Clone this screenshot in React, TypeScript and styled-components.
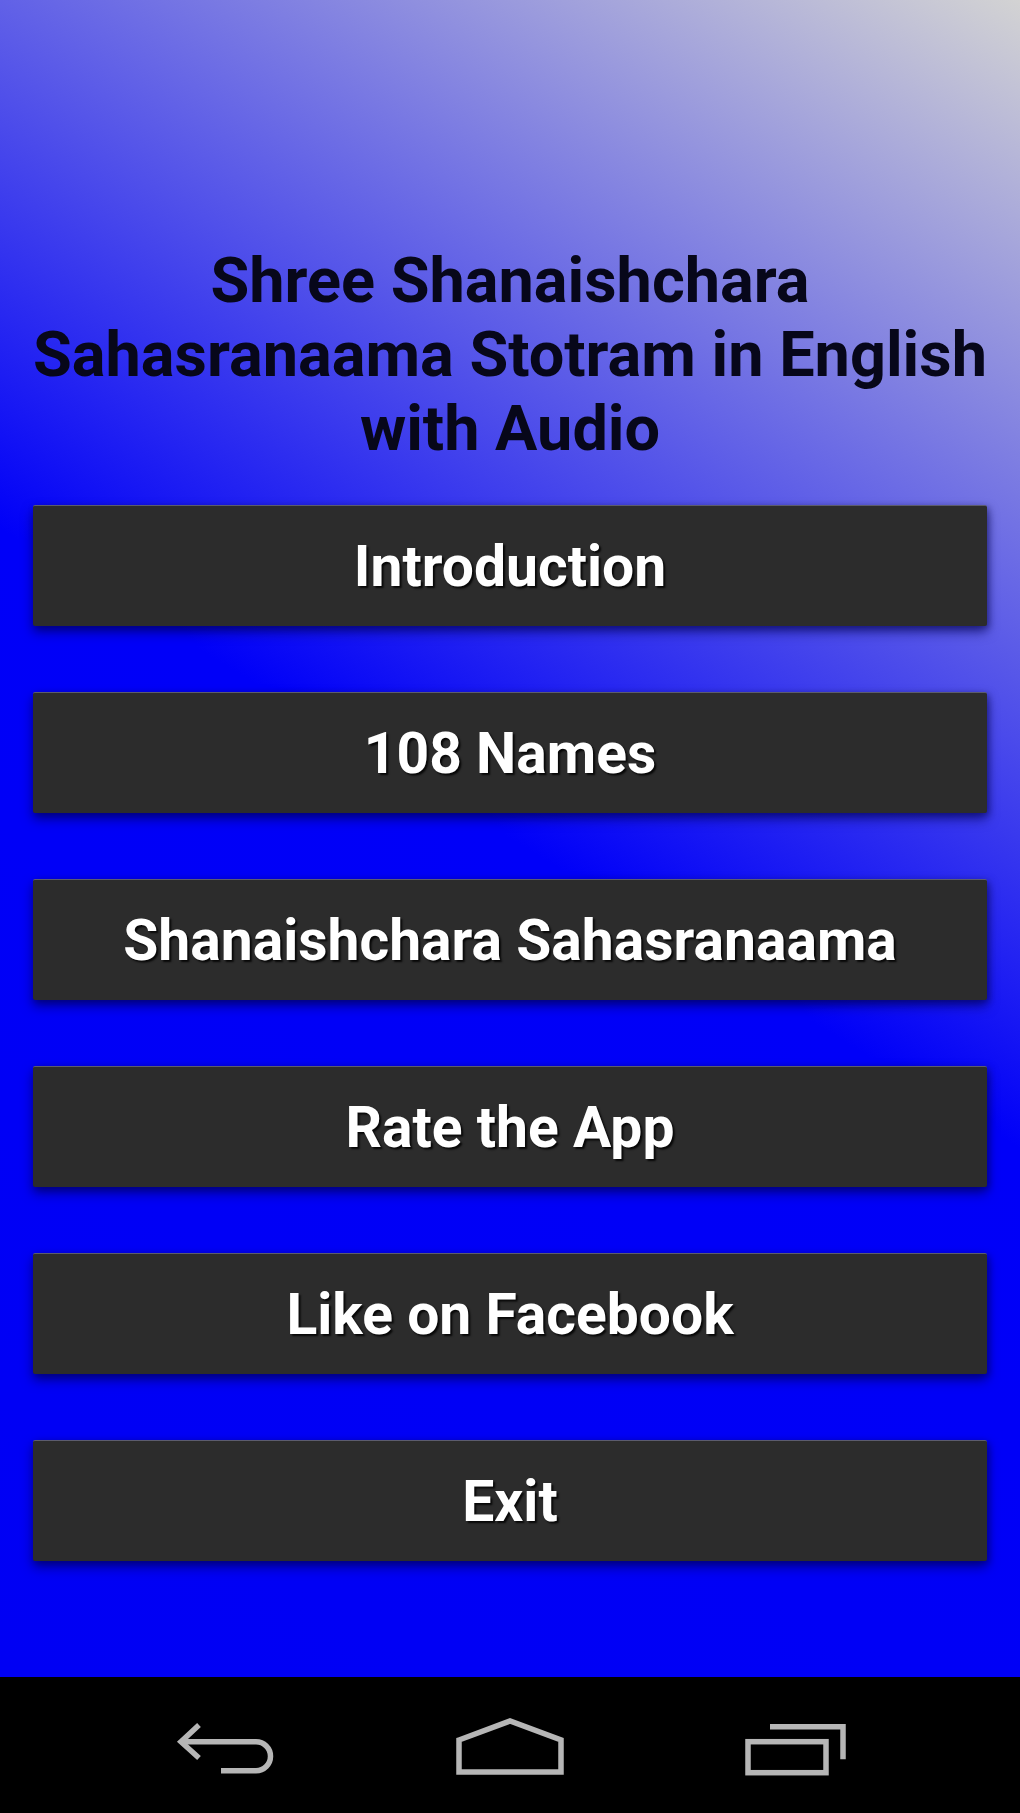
import React from "react";
import styled, { createGlobalStyle } from "styled-components";

const GlobalStyle = createGlobalStyle`
  html, body {
    margin: 0;
    padding: 0;
    background: #000;
  }
  body {
    font-family: Roboto, "Liberation Sans", Arial, sans-serif;
  }
  * { box-sizing: border-box; }
`;

const Screen = styled.div`
  width: 1020px;
  height: 1813px;
  display: flex;
  flex-direction: column;
  overflow: hidden;
`;

const Main = styled.main`
  flex: 1;
  display: flex;
  flex-direction: column;
  align-items: stretch;
  padding: 244px 33px 0;
  background: linear-gradient(31.3deg, #0000f4 0%, #0000f8 50%, #d3d3d3 100%);
`;

const Title = styled.h1`
  margin: 0 0 39px;
  font-family: Roboto, "Liberation Sans", Arial, sans-serif;
  font-weight: 700;
  font-size: 63px;
  line-height: 74px;
  color: #07071a;
  text-align: center;
  white-space: nowrap;
`;

const Menu = styled.nav`
  display: flex;
  flex-direction: column;
  gap: 66px;
`;

const MenuButton = styled.button`
  height: 121px;
  width: 100%;
  border: none;
  border-top: 1px solid rgba(150, 150, 190, 0.45);
  border-radius: 2px;
  background: #2c2c2c;
  color: #ffffff;
  font-family: Roboto, "Liberation Sans", Arial, sans-serif;
  font-weight: 700;
  font-size: 57px;
  text-shadow: 2px 2px 2px rgba(0, 0, 0, 0.85);
  box-shadow: 0 6px 12px rgba(0, 0, 80, 0.6), 2px 2px 6px rgba(0, 0, 60, 0.35);
  cursor: pointer;
  display: flex;
  align-items: center;
  justify-content: center;
  padding: 0;
`;

const NavBar = styled.footer`
  height: 136px;
  flex-shrink: 0;
  background: #000;
  display: flex;
  align-items: center;
  justify-content: center;
  gap: 175px;
`;

const NavIcon = styled.svg`
  width: 110px;
  height: 60px;
  display: block;
  fill: none;
  stroke: #b6b6b6;
  stroke-width: 5.5;
  overflow: visible;
`;

const BackIcon = () => (
  <NavIcon viewBox="0 0 110 60">
    <path d="M29 10 L11 26.7 L29 43" strokeLinejoin="miter" />
    <path d="M11 26.7 H86 A14.5 14.5 0 0 1 86 55.7 H51" />
  </NavIcon>
);

const HomeIcon = () => (
  <NavIcon viewBox="0 0 110 60">
    <path d="M4 25 L55 6 L106 25 V57 H4 Z" strokeLinejoin="miter" />
  </NavIcon>
);

const RecentsIcon = () => (
  <NavIcon viewBox="0 0 110 60">
    <path d="M30 11.7 H103 V44.3" />
    <rect x="8" y="26.7" width="78" height="31" />
  </NavIcon>
);

const items = [
  "Introduction",
  "108 Names",
  "Shanaishchara Sahasranaama",
  "Rate the App",
  "Like on Facebook",
  "Exit",
];

export default function App() {
  return (
    <>
      <GlobalStyle />
      <Screen>
        <Main>
          <Title>
            Shree Shanaishchara
            <br />
            Sahasranaama Stotram in English
            <br />
            with Audio
          </Title>
          <Menu>
            {items.map((label) => (
              <MenuButton key={label}>{label}</MenuButton>
            ))}
          </Menu>
        </Main>
        <NavBar>
          <BackIcon />
          <HomeIcon />
          <RecentsIcon />
        </NavBar>
      </Screen>
    </>
  );
}
